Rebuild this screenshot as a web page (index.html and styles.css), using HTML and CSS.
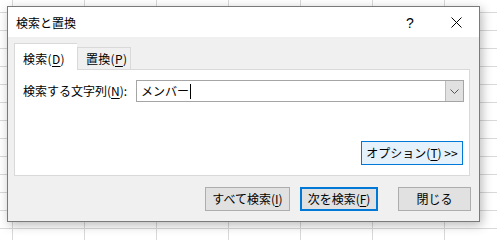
FILE: index.html
```html
<!DOCTYPE html>
<html lang="ja">
<head>
<meta charset="utf-8">
<title>検索と置換</title>
<link rel="stylesheet" href="styles.css">
</head>
<body>
<div class="dialog">
  <div class="titlebar">
    <span class="title">検索と置換</span>
    <div class="caption-buttons">
      <span class="cap-btn help">?</span>
      <span class="cap-btn close">
        <svg width="11" height="11" viewBox="0 0 11 11"><path d="M0.5 0.5 L10.5 10.5 M10.5 0.5 L0.5 10.5" stroke="#000" stroke-width="1" fill="none"/></svg>
      </span>
    </div>
  </div>
  <div class="body">
    <div class="tabs">
      <div class="tab active">検索(<u>D</u>)</div>
      <div class="tab">置換(<u>P</u>)</div>
    </div>
    <div class="panel">
      <div class="find-row">
        <label class="find-label">検索する文字列(<u>N</u>):</label>
        <div class="combo">
          <div class="combo-text">メンバー<span class="caret"></span></div>
          <div class="combo-drop">
            <svg width="9" height="5" viewBox="0 0 9 5"><path d="M0.5 0.5 L4.5 4.5 L8.5 0.5" stroke="#555" stroke-width="1" fill="none"/></svg>
          </div>
        </div>
      </div>
      <div class="options-row">
        <button class="btn options">オプション(<u>T</u>) &gt;&gt;</button>
      </div>
    </div>
    <div class="actions">
      <button class="btn find-all">すべて検索(<u>I</u>)</button>
      <button class="btn find-next">次を検索(<u>F</u>)</button>
      <button class="btn close-btn">閉じる</button>
    </div>
  </div>
</div>
</body>
</html>
```
FILE: styles.css
```css
html, body {
  height: 100%;
}
body {
  margin: 0;
  background-color: #ffffff;
  background-image:
    linear-gradient(to right, #d9d9d9 1px, transparent 1px),
    linear-gradient(to bottom, #d9d9d9 1px, transparent 1px);
  background-size: 72px 18px;
  background-position: 12px 12px;
  font-family: "Noto Sans CJK JP", "Noto Sans", sans-serif;
  font-size: 12px;
  color: #000;
  position: relative;
  overflow: hidden;
}
u {
  text-decoration: underline;
  text-underline-offset: 2px;
}
.dialog {
  position: absolute;
  left: 7px;
  top: 6px;
  width: 471px;
  height: 214px;
  border: 1px solid #7a7a7a;
  background: #f0f0f0;
  box-shadow: 2px 3px 10px rgba(0, 0, 0, 0.28);
  display: flex;
  flex-direction: column;
}
.titlebar {
  height: 30px;
  background: #ffffff;
  display: flex;
  align-items: center;
  justify-content: space-between;
  padding-left: 8px;
  line-height: 14px;
}
.title {
  font-size: 12px;
  padding-top: 1px;
}
.caption-buttons {
  display: flex;
  height: 100%;
}
.cap-btn {
  width: 46px;
  height: 100%;
  display: flex;
  align-items: center;
  justify-content: center;
}
.help {
  font-family: "Liberation Sans", "DejaVu Sans", sans-serif;
  font-size: 14px;
  padding-top: 1px;
}
.body {
  flex: 1;
  padding: 6px 9px 0 6px;
  display: flex;
  flex-direction: column;
}
.tabs {
  display: flex;
  align-items: flex-end;
  height: 26px;
  position: relative;
  z-index: 1;
}
.tab {
  box-sizing: border-box;
  height: 22px;
  padding: 4px 0 0 8px;
  width: 54px;
  border: 1px solid #d9d9d9;
  border-bottom: none;
  background: #f0f0f0;
  line-height: 14px;
  white-space: nowrap;
  letter-spacing: 0.3px;
}
.tab.active {
  height: 27px;
  margin-bottom: -1px;
  width: 63px;
  padding: 8px 0 0 8px;
  background: #ffffff;
  border-right: none;
}
.panel {
  box-sizing: border-box;
  height: 107px;
  background: #ffffff;
  border: 1px solid #d9d9d9;
  padding: 10px 5px 10px 8px;
  display: flex;
  flex-direction: column;
  justify-content: space-between;
}
.find-row {
  display: flex;
  align-items: center;
}
.find-label {
  width: 113px;
  line-height: 14px;
  white-space: nowrap;
}
.combo {
  box-sizing: border-box;
  width: 328px;
  height: 22px;
  border: 1px solid #a5a5a5;
  display: flex;
  background: #ffffff;
}
.combo-text {
  flex: 1;
  padding-left: 4px;
  display: flex;
  align-items: center;
  line-height: 14px;
}
.caret {
  display: inline-block;
  width: 1px;
  height: 15px;
  background: #000;
  margin-left: 1px;
}
.combo-drop {
  width: 17px;
  background: #e1e1e1;
  border-left: 1px solid #bcbcbc;
  display: flex;
  align-items: center;
  justify-content: center;
}
.options-row {
  display: flex;
  justify-content: flex-end;
  padding-right: 1px;
}
.btn {
  box-sizing: border-box;
  height: 24px;
  border: 1px solid #adadad;
  background: #e1e1e1;
  font-family: "Noto Sans CJK JP", "Noto Sans", sans-serif;
  font-size: 12px;
  line-height: 14px;
  color: #000;
  padding: 0;
  margin: 0;
  white-space: nowrap;
}
.options {
  width: 102px;
  background: #e5f1fb;
  border-color: #0078d7;
}
.actions {
  display: flex;
  justify-content: flex-end;
  padding: 11px 0 0 0;
  margin-right: -1px;
}
.find-all {
  width: 85px;
}
.find-next {
  width: 78px;
  margin-left: 10px;
  border: 2px solid #0078d7;
}
.close-btn {
  width: 73px;
  margin-left: 20px;
}
```
